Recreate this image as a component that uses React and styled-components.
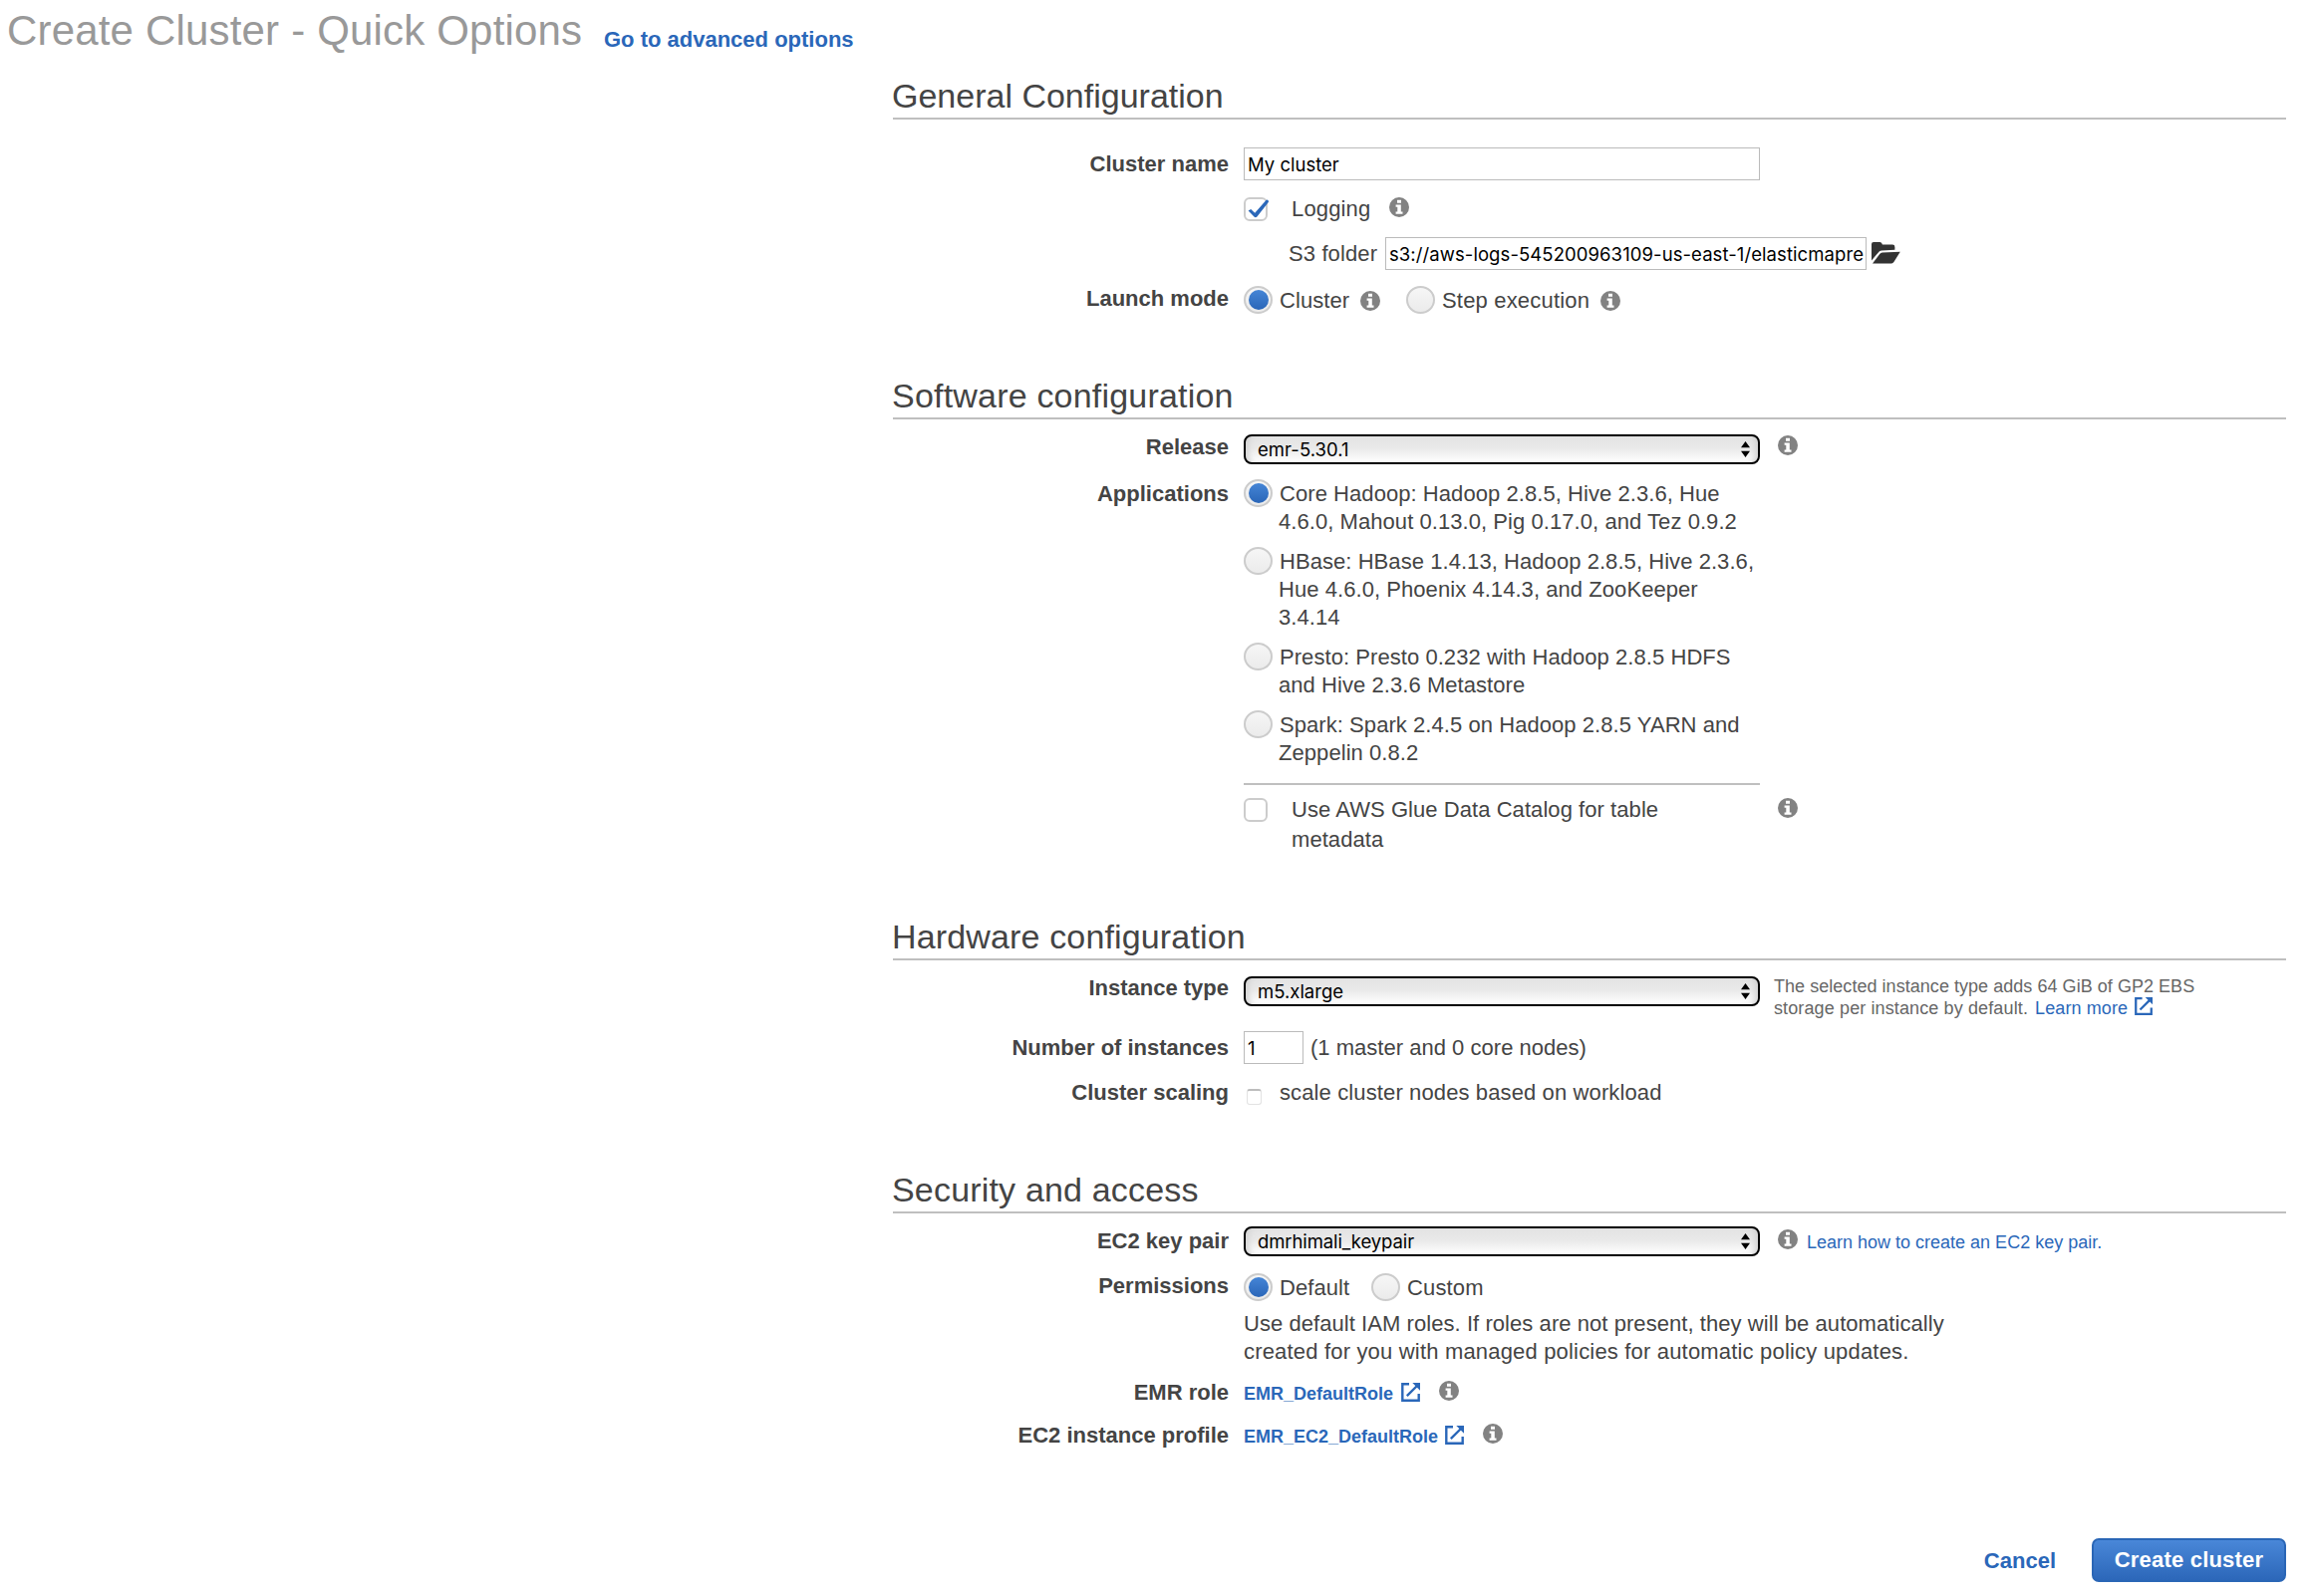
import React from "react";
import styled, { createGlobalStyle } from "styled-components";

const GlobalStyle = createGlobalStyle`
  body { margin: 0; background: #fff; }
  * { box-sizing: border-box; }
`;

const Page = styled.main`
  width: 2320px;
  height: 1602px;
  overflow: hidden;
  padding-top: 7px;
  background: #fff;
  color: #444;
  font: 22px/28px "Liberation Sans", Arial, sans-serif;
`;
const TitleBar = styled.header`
  display: flex;
  align-items: flex-start;
  height: 70px;
  padding-left: 7px;
`;
const Title = styled.h1`
  width: 599px;
  margin: 0;
  font-size: 42px;
  line-height: 47px;
  font-weight: 400;
  letter-spacing: 0.18px;
  color: #999;
  white-space: nowrap;
`;
const Link = styled.a`
  margin-top: ${(p) => p.$top || 0}px;
  color: #2a67b9;
  font-size: ${(p) => p.$size || 18}px;
  line-height: ${(p) => (p.$size ? 28 : 22)}px;
  font-weight: ${(p) => (p.$bold ? 700 : 400)};
  text-decoration: none;
  white-space: nowrap;
`;
const Form = styled.form`
  display: flex;
  flex-direction: column;
  width: 1398px;
  margin-left: 896px;
`;
const Section = styled.section`
  height: ${(p) => p.$height}px;
`;
const Heading = styled.h2`
  margin: 0;
  padding-bottom: 3px;
  border-bottom: 2px solid #bfbfbf;
  font-size: 34px;
  line-height: 38px;
  font-weight: 400;
  letter-spacing: ${(p) => p.$track || 0}px;
  text-indent: -1px;
`;
const Row = styled.div`
  display: grid;
  grid-template-columns: 337px 1fr;
  column-gap: 15px;
  align-items: start;
  height: ${(p) => p.$height}px;
  margin-top: ${(p) => p.$gap}px;
`;
const Label = styled.div`
  margin-top: ${(p) => p.$top || 0}px;
  font-weight: 700;
  text-align: right;
  white-space: nowrap;
`;
const Field = styled.div`
  display: flex;
  align-items: flex-start;
`;
const Text = styled.div`
  width: ${(p) => (p.$width ? p.$width + "px" : "auto")};
  margin-top: ${(p) => p.$top || 0}px;
  margin-left: ${(p) => p.$left || 0}px;
  line-height: ${(p) => p.$line || 28}px;
  letter-spacing: ${(p) => p.$track ?? 0.06}px;
  text-indent: ${(p) => p.$indent || 0}px;
  white-space: nowrap;
`;
const Note = styled.div`
  display: flex;
  flex-direction: column;
  margin: -1px 0 0 14px;
  color: #666;
  font-size: 18px;
  line-height: 22px;
  letter-spacing: 0.04px;
  white-space: nowrap;
`;
const NoteLine = styled.div`
  display: flex;
  gap: 7px;
  letter-spacing: 0.12px;
`;
const TextBox = styled.div`
  width: ${(p) => p.$width}px;
  height: 33px;
  padding: 2px 3px 0;
  overflow: hidden;
  border: 1px solid #bbb;
  background: #fff;
  color: #000;
  font: 18.5px/29px Inter, "Liberation Sans", sans-serif;
  letter-spacing: ${(p) => p.$track || 0}px;
  white-space: nowrap;
`;
const SelectBox = styled.div`
  display: flex;
  align-items: center;
  justify-content: space-between;
  width: 518px;
  height: 30px;
  padding: 0 8px 0 12px;
  border: 2px solid #000;
  border-radius: 8px;
  background: linear-gradient(#e3e3e3, #e9e9e9 45%, #fff);
  box-shadow: inset 7px 0 6px -4px #d2d2d2, inset -7px 0 6px -4px #d2d2d2;
  color: #000;
  font: 18.5px/26px Inter, "Liberation Sans", sans-serif;
  letter-spacing: ${(p) => p.$track || 0}px;
`;
const Radio = styled.span`
  flex: none;
  width: 29px;
  height: 28px;
  padding: 3px;
  margin-left: ${(p) => p.$left || 0}px;
  border: 2px solid #ccc;
  border-radius: 50%;
  background: linear-gradient(#f6f6f6, #ebebeb);
  &::before {
    content: "";
    display: ${(p) => (p.$on ? "block" : "none")};
    width: 20px;
    height: 20px;
    margin-top: -1px;
    border-radius: 50%;
    background: linear-gradient(#4585d6, #2a66b8);
  }
`;
const CheckBox = styled.span`
  flex: none;
  width: 24px;
  height: 24px;
  border: 2px solid #ccc;
  border-radius: 6px;
  background: #fff;
`;
const PlainCheck = styled.span`
  flex: none;
  width: 15px;
  height: 16px;
  margin: 10px 0 0 3px;
  border: 1px solid #e2e2e2;
  border-top: 2px solid #bdbdbd;
  border-radius: 3px;
  background: #fff;
`;
const Icon = styled.svg`
  display: block;
  flex: none;
  overflow: visible;
  margin-top: ${(p) => p.$top || 0}px;
  margin-left: ${(p) => p.$left || 0}px;
`;
const Option = styled.div`
  display: flex;
  align-items: flex-start;
  margin-bottom: 12px;
  height: ${(p) => p.$lines * 28}px;
`;
const Divider = styled.hr`
  width: 518px;
  height: 2px;
  margin: 17px 0 13px;
  border: 0;
  background: #bfbfbf;
`;
const Footer = styled.footer`
  display: flex;
  justify-content: flex-end;
  align-items: flex-start;
  gap: 36px;
`;
const Submit = styled.button`
  width: 195px;
  height: 44px;
  padding: 0;
  border: 2px solid #2a66b6;
  border-radius: 7px;
  background: linear-gradient(#4987d8, #2c67b9);
  color: #fff;
  font: 700 22px/28px "Liberation Sans", Arial, sans-serif;
  letter-spacing: 0.2px;
`;

const Info = ({ top, left }) => (
  <Icon $top={top} $left={left} width="20" height="20" viewBox="0 0 20 20">
    <circle cx="10" cy="10" r="10" fill="#828282" />
    <path d="M8 2.7h4v3.1H8zM6.6 7.6h5.2v7h1.7v2.2H6.6v-2.2h1.7V9.8H6.6z" fill="#fff" />
  </Icon>
);
const External = ({ top, left, size = 19 }) => (
  <Icon $top={top} $left={left} width={size} height={size} viewBox="0 0 19 19" fill="none" stroke="#2a67b9" strokeWidth="2.4">
    <path d="M8 1.3H1.3v16.5h16.4V11M5.8 13.2L16 3" />
    <path d="M11.3 0H19v7.7z" fill="#2a67b9" stroke="none" />
  </Icon>
);
const Arrows = () => (
  <Icon width="9" height="16" viewBox="0 0 9 16">
    <path d="M4.5 0L9 6.3H0zM4.5 16L0 9.7h9z" />
  </Icon>
);
const Check = () => (
  <Icon width="24" height="24" viewBox="2 2 24 24">
    <path d="M4.6 13.6l2.6-1.5 4 3.6L22.2 3.2q1.2-1.2 2.4 0 .8.9 0 2L13.4 19.4q-1.6 1.6-3 0z" fill="#2a67b9" />
  </Icon>
);
const Folder = () => (
  <Icon $top={5} $left={5} width="29" height="22" viewBox="0 0 29 22" fill="#333">
    <path d="M0 18.5V2Q0 0 2 0h6.5q2 0 2.4 2.6H21q2.4 0 2.4 2.4v2.8L10 8.6q-2 .2-3.2 1.8z" />
    <path d="M1 21.5L8.2 12q1-1.3 2.6-1.4l18-.9-6.4 10.4q-.9 1.4-2.4 1.4z" />
  </Icon>
);

const applications = [
  ["Core Hadoop: Hadoop 2.8.5, Hive 2.3.6, Hue", "4.6.0, Mahout 0.13.0, Pig 0.17.0, and Tez 0.9.2"],
  ["HBase: HBase 1.4.13, Hadoop 2.8.5, Hive 2.3.6,", "Hue 4.6.0, Phoenix 4.14.3, and ZooKeeper", "3.4.14"],
  ["Presto: Presto 0.232 with Hadoop 2.8.5 HDFS", "and Hive 2.3.6 Metastore"],
  ["Spark: Spark 2.4.5 on Hadoop 2.8.5 YARN and", "Zeppelin 0.8.2"],
];

const Lines = ({ lines }) =>
  lines.map((line, i) => (
    <React.Fragment key={line}>
      {i > 0 && <br />}
      {line}
    </React.Fragment>
  ));

export default function App() {
  return (
    <Page>
      <GlobalStyle />
      <TitleBar>
        <Title>Create Cluster - Quick Options</Title>
        <Link $bold $size={22} $top={19}>Go to advanced options</Link>
      </TitleBar>
      <Form>
        <Section $height={301}>
          <Heading>General Configuration</Heading>
          <Row $gap={28} $height={33}>
            <Label $top={3}>Cluster name</Label>
            <Field><TextBox $width={518}>My cluster</TextBox></Field>
          </Row>
          <Row $gap={17} $height={24}>
            <span />
            <Field>
              <CheckBox><Check /></CheckBox>
              <Text $top={-2} $left={24} $width={98} $track={0.15}>Logging</Text>
              <Info />
            </Field>
          </Row>
          <Row $gap={16} $height={33}>
            <span />
            <Field>
              <Text $top={3} $left={45} $width={97} $track={0.12}>S3 folder</Text>
              <TextBox $width={483} $track={0.08}>s3://aws-logs-545200963109-us-east-1/elasticmapre</TextBox>
              <Folder />
            </Field>
          </Row>
          <Row $gap={16} $height={28}>
            <Label $top={-1}>Launch mode</Label>
            <Field>
              <Radio $on />
              <Text $top={1} $left={7} $width={81}>Cluster</Text>
              <Info top={5} />
              <Radio $left={26} />
              <Text $top={1} $left={7} $width={159} $track={0.18}>Step execution</Text>
              <Info top={5} />
            </Field>
          </Row>
        </Section>

        <Section $height={543}>
          <Heading $track={0.2}>Software configuration</Heading>
          <Row $gap={15} $height={30}>
            <Label $top={-1}>Release</Label>
            <Field>
              <SelectBox $track={0.05}>emr-5.30.1<Arrows /></SelectBox>
              <Info top={1} left={18} />
            </Field>
          </Row>
          <Row $gap={15} $height={320}>
            <Label $top={1}>Applications</Label>
            <div>
              {applications.map((lines, i) => (
                <Option key={lines[0]} $lines={lines.length}>
                  <Radio $on={i === 0} />
                  <Text $top={1} $left={6} $indent={1}><Lines lines={lines} /></Text>
                </Option>
              ))}
              <Divider />
              <Field>
                <CheckBox />
                <Text $top={-3} $left={24} $line={30} $width={488}>
                  <Lines lines={["Use AWS Glue Data Catalog for table", "metadata"]} />
                </Text>
                <Info />
              </Field>
            </div>
          </Row>
        </Section>

        <Section $height={254}>
          <Heading $track={0.15}>Hardware configuration</Heading>
          <Row $gap={16} $height={30}>
            <Label $top={-2}>Instance type</Label>
            <Field>
              <SelectBox>m5.xlarge<Arrows /></SelectBox>
              <Note>
                <span>The selected instance type adds 64 GiB of GP2 EBS</span>
                <NoteLine>storage per instance by default. <Link>Learn more</Link><External size={18} /></NoteLine>
              </Note>
            </Field>
          </Row>
          <Row $gap={25} $height={33}>
            <Label $top={3}>Number of instances</Label>
            <Field>
              <TextBox $width={60}>1</TextBox>
              <Text $top={3} $left={7} $track={0.02}>(1 master and 0 core nodes)</Text>
            </Field>
          </Row>
          <Row $gap={15} $height={28}>
            <Label>Cluster scaling</Label>
            <Field>
              <PlainCheck />
              <Text $left={18} $track={0.12}>scale cluster nodes based on workload</Text>
            </Field>
          </Row>
        </Section>

        <Section $height={369}>
          <Heading $track={0.18}>Security and access</Heading>
          <Row $gap={13} $height={30}>
            <Label $top={1}>EC2 key pair</Label>
            <Field>
              <SelectBox $track={-0.1}>dmrhimali_keypair<Arrows /></SelectBox>
              <Info top={3} left={18} />
              <Text $top={1} $left={9} $track={0}><Link>Learn how to create an EC2 key pair.</Link></Text>
            </Field>
          </Row>
          <Row $gap={17} $height={93}>
            <Label $top={-1}>Permissions</Label>
            <div>
              <Field>
                <Radio $on />
                <Text $top={1} $left={7} $width={92}>Default</Text>
                <Radio />
                <Text $top={1} $left={7} $track={0.15}>Custom</Text>
              </Field>
              <Text $top={8}>Use default IAM roles. If roles are not present, they will be automatically</Text>
              <Text $track={0.18}>created for you with managed policies for automatic policy updates.</Text>
            </div>
          </Row>
          <Row $gap={13} $height={28}>
            <Label>EMR role</Label>
            <Field>
              <Link $bold $top={4}>EMR_DefaultRole</Link>
              <External top={4} left={8} />
              <Info top={2} left={19} />
            </Field>
          </Row>
          <Row $gap={15} $height={28}>
            <Label>EC2 instance profile</Label>
            <Field>
              <Link $bold $top={4}>EMR_EC2_DefaultRole</Link>
              <External top={4} left={7} />
              <Info top={2} left={19} />
            </Field>
          </Row>
        </Section>
        <Footer>
          <Link $bold $size={22} $top={9}>Cancel</Link>
          <Submit type="button">Create cluster</Submit>
        </Footer>
      </Form>
    </Page>
  );
}
